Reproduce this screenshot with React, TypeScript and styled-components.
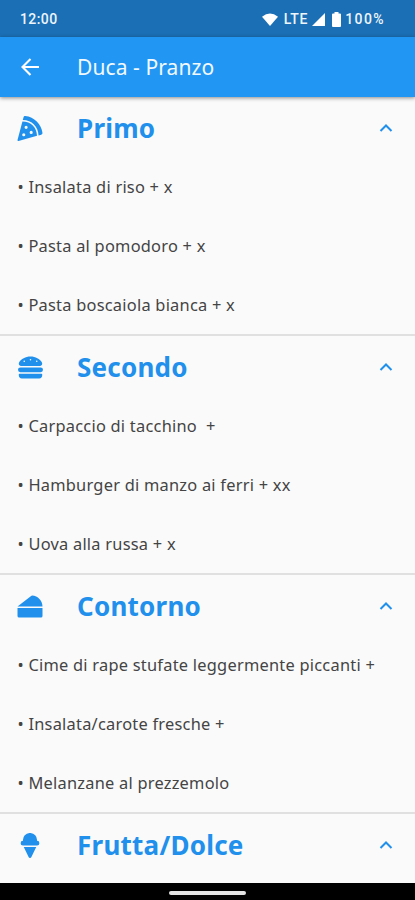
import React from 'react';
import styled, { createGlobalStyle } from 'styled-components';
import { FaPizzaSlice, FaHamburger, FaCheese, FaIceCream } from 'react-icons/fa';
import type { IconType } from 'react-icons';

const GlobalStyle = createGlobalStyle`
  * { box-sizing: border-box; }
  html, body { margin: 0; background: #fafafa; }
`;

const Screen = styled.div`
  width: 415px;
  height: 900px;
  display: flex;
  flex-direction: column;
  overflow: hidden;
  background: #fafafa;
  font-family: 'Noto Sans', sans-serif;
`;

const StatusBar = styled.div`
  height: 37px;
  flex: none;
  display: flex;
  align-items: center;
  justify-content: space-between;
  padding: 1px 30px 0 20px;
  background: #1b6fb5;
  color: #eef5fc;
  font: 500 14px/18px Roboto, sans-serif;
`;

const StatusGroup = styled.div`
  display: flex;
  align-items: center;
`;

const StatusText = styled.span<{ $spacing?: number; $left?: number }>`
  letter-spacing: ${(p) => p.$spacing ?? 0}px;
  margin-left: ${(p) => p.$left ?? 0}px;
`;

const StatusIcon = styled.svg<{ $left?: number }>`
  display: block;
  margin-left: ${(p) => p.$left ?? 0}px;
  fill: #fff;
`;

const AppBar = styled.header`
  height: 60px;
  flex: none;
  display: flex;
  align-items: center;
  padding-left: 20px;
  background: #2196f3;
  box-shadow: 0 1px 4px rgba(0, 0, 0, 0.45);
  z-index: 1;
`;

const BackIcon = styled.svg`
  width: 20px;
  height: 20px;
  display: block;
  fill: none;
  stroke: #fff;
  stroke-width: 2.1;
`;

const Title = styled.h1`
  margin: 0 0 0 37px;
  color: #f2f9ff;
  font-size: 21px;
  line-height: 28px;
  font-weight: 400;
  letter-spacing: 0.08px;
`;

const List = styled.main`
  flex: 1;
  min-height: 0;
  overflow: hidden;
`;

const Section = styled.section`
  height: 239px;
  border-bottom: 2px solid #e0e0e0;
`;

const SectionHeader = styled.div`
  height: 60px;
  display: flex;
  align-items: center;
  padding: 2px 22px 0 17px;
  color: #2190ec;
`;

const IconSlot = styled.div<{ $width: number }>`
  width: 60px;
  display: flex;
  padding-left: ${(p) => (26 - p.$width) / 2}px;

  svg {
    width: ${(p) => p.$width}px;
    height: 25px;
  }
`;

const SectionTitle = styled.h2`
  flex: 1;
  margin: 0;
  font-size: 26px;
  line-height: 36px;
  font-weight: 700;
  letter-spacing: 0.24px;
  font-kerning: none;
`;

const Chevron = styled.svg`
  width: 14px;
  height: 10px;
  display: block;
  fill: none;
  stroke: currentColor;
  stroke-width: 2;
`;

const Item = styled.div`
  height: 59.2px;
  padding-left: 17.5px;
  font-size: 16.4px;
  line-height: 59px;
  letter-spacing: 0.24px;
  white-space: pre;
  color: #444;
`;

const NavBar = styled.footer`
  height: 17px;
  flex: none;
  display: flex;
  justify-content: center;
  padding-top: 8px;
  background: #000;
`;

const NavHandle = styled.div`
  width: 77px;
  height: 4px;
  border-radius: 2px;
  background: #e4e4e4;
`;

interface Course {
  title: string;
  icon: IconType;
  iconWidth: number;
  items: string[];
}

const courses: Course[] = [
  { title: 'Primo', icon: FaPizzaSlice, iconWidth: 26, items: ['Insalata di riso + x', 'Pasta al pomodoro + x', 'Pasta boscaiola bianca + x'] },
  { title: 'Secondo', icon: FaHamburger, iconWidth: 25, items: ['Carpaccio di tacchino  +', 'Hamburger di manzo ai ferri + xx', 'Uova alla russa + x'] },
  { title: 'Contorno', icon: FaCheese, iconWidth: 26, items: ['Cime di rape stufate leggermente piccanti +', 'Insalata/carote fresche +', 'Melanzane al prezzemolo'] },
  { title: 'Frutta/Dolce', icon: FaIceCream, iconWidth: 26, items: [] },
];

export default function App() {
  return (
    <Screen>
      <GlobalStyle />
      <StatusBar>
        <StatusText $spacing={0.4}>12:00</StatusText>
        <StatusGroup>
          <StatusIcon width="16" height="13" viewBox="0 0 16 14" preserveAspectRatio="none">
            <path d="M0 4 Q8 -3 16 4 L8 14Z" />
          </StatusIcon>
          <StatusText $left={6} $spacing={0.7}>LTE</StatusText>
          <StatusIcon $left={4} width="13" height="13" viewBox="0 0 13 13">
            <path d="M13 0V13H0Z" />
          </StatusIcon>
          <StatusIcon $left={7} width="9" height="15" viewBox="0 0 9 15">
            <path d="M2.5 0h4v1.5H8q1 0 1 1V14q0 1-1 1H1q-1 0-1-1V2.5q0-1 1-1h1.5Z" />
          </StatusIcon>
          <StatusText $left={4} $spacing={1.4}>100%</StatusText>
        </StatusGroup>
      </StatusBar>
      <AppBar>
        <BackIcon viewBox="0 0 20 20">
          <path d="M19 10H3M10.5 2L2.5 10l8 8" />
        </BackIcon>
        <Title>Duca - Pranzo</Title>
      </AppBar>
      <List>
        {courses.map(({ title, icon: Icon, iconWidth, items }) => (
          <Section key={title}>
            <SectionHeader>
              <IconSlot $width={iconWidth}>
                <Icon />
              </IconSlot>
              <SectionTitle>{title}</SectionTitle>
              <Chevron viewBox="0 0 14 10">
                <path d="M1.5 8L7 2.5 12.5 8" />
              </Chevron>
            </SectionHeader>
            {items.map((item) => (
              <Item key={item}>• {item}</Item>
            ))}
          </Section>
        ))}
      </List>
      <NavBar>
        <NavHandle />
      </NavBar>
    </Screen>
  );
}
